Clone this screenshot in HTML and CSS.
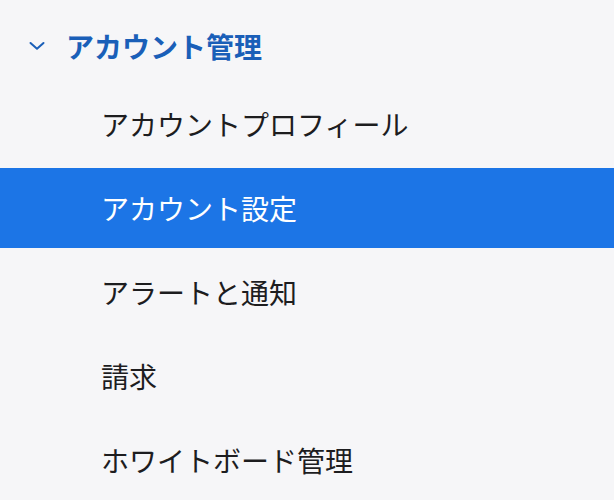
FILE: index.html
```html
<!DOCTYPE html>
<html lang="ja">
<head>
<meta charset="utf-8">
<link rel="stylesheet" href="styles.css">
</head>
<body>
<nav class="nav">
  <div class="group-header">
    <svg class="chevron" width="16" height="10" viewBox="0 0 16 10"><polyline points="1.5,2 8,7.8 14.5,2" fill="none" stroke="#1a5fb8" stroke-width="2" stroke-linecap="round" stroke-linejoin="round"/></svg>
    <span class="group-title">アカウント管理</span>
  </div>
  <ul class="items">
    <li class="item">アカウントプロフィール</li>
    <li class="item active">アカウント設定</li>
    <li class="item">アラートと通知</li>
    <li class="item">請求</li>
    <li class="item">ホワイトボード管理</li>
  </ul>
</nav>
</body>
</html>
```
FILE: styles.css
```css
html, body {
  margin: 0;
  padding: 0;
  background: #f6f6f8;
  font-family: "Noto Sans CJK JP", "Noto Sans", sans-serif;
}
.nav {
  width: 100%;
  height: 500px;
  overflow: hidden;
}
.group-header {
  display: flex;
  align-items: center;
  height: 76px;
  padding-top: 8px;
  padding-left: 29px;
}
.chevron {
  margin-right: 21px;
  margin-top: -1px;
  flex: none;
}
.group-title {
  font-size: 28px;
  font-weight: 700;
  color: #1a5fb8;
}
.items {
  list-style: none;
  margin: 0;
  padding: 0;
  display: flex;
  flex-direction: column;
  gap: 4px;
}
.item {
  height: 80px;
  display: flex;
  align-items: center;
  padding-left: 101px;
  font-size: 28px;
  color: #1d1d1f;
}
.item.active {
  background: #1c75e6;
  color: #ffffff;
}
```
